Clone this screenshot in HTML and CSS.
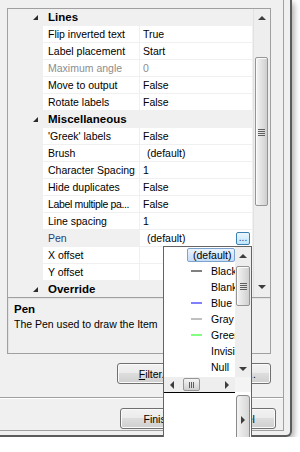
FILE: index.html
```html
<!DOCTYPE html>
<html lang="en">
<head>
  <meta charset="UTF-8">
  <title>Label Properties</title>
  <link rel="stylesheet" href="styles.css">
</head>
<body>
<div class="window">
  <div class="client">
    <!-- Property grid -->
    <div class="grid">
      <div class="rows">
        <div class="row cat"><span class="tog"></span><span class="cat-name">Lines</span></div>
        <div class="row"><span class="name">Flip inverted text</span><span class="value">True</span></div>
        <div class="row"><span class="name">Label placement</span><span class="value">Start</span></div>
        <div class="row off"><span class="name">Maximum angle</span><span class="value">0</span></div>
        <div class="row"><span class="name">Move to output</span><span class="value">False</span></div>
        <div class="row"><span class="name">Rotate labels</span><span class="value">False</span></div>
        <div class="row cat"><span class="tog"></span><span class="cat-name">Miscellaneous</span></div>
        <div class="row"><span class="name">'Greek' labels</span><span class="value">False</span></div>
        <div class="row"><span class="name">Brush</span><span class="value wide">(default)</span></div>
        <div class="row"><span class="name">Character Spacing</span><span class="value">1</span></div>
        <div class="row"><span class="name">Hide duplicates</span><span class="value">False</span></div>
        <div class="row"><span class="name tight">Label multiple pa...</span><span class="value">False</span></div>
        <div class="row"><span class="name">Line spacing</span><span class="value">1</span></div>
        <div class="row sel">
          <span class="name">Pen</span>
          <span class="value wide">(default)<span class="dots">...</span></span>
        </div>
        <div class="row"><span class="name">X offset</span><span class="value"></span></div>
        <div class="row"><span class="name">Y offset</span><span class="value"></span></div>
        <div class="row cat"><span class="tog"></span><span class="cat-name">Override</span></div>
      </div>
      <div class="vscroll">
        <div class="arrow"><span class="up"></span></div>
        <div class="thumb grid-thumb"><span class="grip"></span></div>
        <div class="arrow bottom"><span class="down"></span></div>
      </div>
    </div>

    <!-- Help text -->
    <div class="desc">
      <div class="desc-title">Pen</div>
      <div>The Pen used to draw the Item</div>
    </div>

    <div class="btn-row first">
      <button><u>F</u>ilter...</button>
      <button>Options...</button>
    </div>
    <div class="sep"></div>
    <div class="btn-row second">
      <button>Finish</button>
      <button>Cancel</button>
    </div>
  </div>

  <!-- Pen drop-down -->
  <div class="popup">
    <div class="plist">
      <div class="items">
        <div class="item"><span class="hl">(default)</span></div>
        <div class="item"><span class="sw black"></span>Black</div>
        <div class="item"><span class="sw"></span>Blank</div>
        <div class="item"><span class="sw blue"></span>Blue</div>
        <div class="item"><span class="sw gray"></span>Gray</div>
        <div class="item"><span class="sw green"></span>Green</div>
        <div class="item"><span class="sw"></span>Invisible</div>
        <div class="item"><span class="sw"></span>Null</div>
      </div>
      <div class="pscroll">
        <div class="arrow"><span class="up"></span></div>
        <div class="thumb list-thumb"><span class="grip"></span></div>
        <div class="arrow bottom"><span class="down"></span></div>
      </div>
    </div>
    <div class="phs">
      <div class="hbar">
        <div class="harrow"><span class="left"></span></div>
        <div class="hthumb"><span class="vgrip"></span></div>
        <div class="harrow end"><span class="right"></span></div>
      </div>
      <div class="corner"></div>
    </div>
    <div class="pbot">
      <div class="pbot-area"></div>
      <div class="pbot-side"><div class="pbtn"><span class="right"></span></div></div>
    </div>
  </div>
</div>
</body>
</html>
```

FILE: styles.css
```css
* {
  margin: 0;
  padding: 0;
  box-sizing: border-box;
}

body {
  font-family: 'Liberation Sans', Arial, sans-serif;
  font-size: 10.5px;
  color: #000;
  background: #fff;
}

/* Window frame */
.window {
  position: relative;
  width: 292px;
  height: 437px;
  background: #f0f0f0;
  border-right: 2px solid #5c5c5c;
  border-bottom: 2px solid #5c5c5c;
  border-bottom-right-radius: 6px;
  box-shadow: 2px 3px 6px rgba(0, 0, 0, 0.35);
}

.client {
  width: 284px;
  height: 431px;
  border-right: 1px solid #a0a0a0;
  border-bottom: 1px solid #a0a0a0;
  padding: 8px 0 0 7px;
}

/* Property grid */
.grid {
  display: flex;
  width: 264px;
  height: 289px;
  border: 1px solid #a0a0a0;
  border-bottom: none;
}

.rows {
  width: 245px;
  background: #f0f0f0;
  overflow: hidden;
}

.row {
  display: flex;
  height: 16px;
  margin-bottom: 1px;
  line-height: 16px;
  white-space: nowrap;
}

.row.cat {
  align-items: center;
}

.tog {
  width: 0;
  height: 0;
  margin-left: 25px;
  margin-right: 10px;
  border-left: 5px solid transparent;
  border-bottom: 5px solid #2b2b2b;
}

.cat-name {
  font-weight: bold;
  font-size: 11.5px;
}

.name {
  width: 96px;
  margin-left: 35px;
  margin-right: 1px;
  padding-left: 5px;
  background: #fff;
  overflow: hidden;
}

.name.tight {
  letter-spacing: -0.35px;
}

.value {
  display: flex;
  align-items: center;
  width: 112px;
  padding-left: 3px;
  background: #fff;
  overflow: hidden;
}

.value.wide {
  padding-left: 7px;
}

.row.off .name,
.row.off .value {
  color: #8d8d8d;
}

.row.sel .name {
  background: #f0f0f0;
  color: #23407a;
}

.dots {
  width: 14px;
  height: 13px;
  margin-left: auto;
  margin-right: 2px;
  border: 1px solid #3c7fb1;
  border-radius: 2px;
  background: linear-gradient(#eaf6fd, #bee6fd);
  color: #1c3a6e;
  font-size: 10px;
  line-height: 9px;
  text-align: center;
}

/* Scroll bars */
.vscroll,
.pscroll {
  display: flex;
  flex-direction: column;
  width: 17px;
  background: #eeeeee;
  border-left: 1px solid #e2e2e2;
}

.pscroll {
  width: 16px;
  border-left: none;
}

.arrow {
  display: flex;
  align-items: center;
  justify-content: center;
  height: 17px;
}

.arrow.bottom {
  margin-top: auto;
  margin-bottom: 2px;
}

.pscroll .arrow.bottom {
  margin-bottom: 0;
}

.up {
  border-left: 4px solid transparent;
  border-right: 4px solid transparent;
  border-bottom: 4px solid #3d3d3d;
}

.down {
  border-left: 4px solid transparent;
  border-right: 4px solid transparent;
  border-top: 4px solid #3d3d3d;
}

.left {
  border-top: 4px solid transparent;
  border-bottom: 4px solid transparent;
  border-right: 4px solid #3d3d3d;
}

.right {
  border-top: 4px solid transparent;
  border-bottom: 4px solid transparent;
  border-left: 4px solid #3d3d3d;
}

.thumb {
  display: flex;
  align-items: center;
  justify-content: center;
  margin: 0 2px 0 1px;
  border: 1px solid #959595;
  border-radius: 2px;
  background: linear-gradient(to right, #f4f4f4, #e2e2e2 50%, #cfcfcf);
  box-shadow: inset 1px 1px #fbfbfb;
}

.grid-thumb {
  height: 149px;
  margin-top: 31px;
}

.list-thumb {
  height: 40px;
  margin: 2px 1px 0 1px;
}

.grip {
  width: 7px;
  height: 1px;
  margin-top: -5px;
  background: #5e5e5e;
  box-shadow: 0 2px #5e5e5e, 0 4px #5e5e5e, 0 6px #5e5e5e;
}

/* Description panel */
.desc {
  width: 264px;
  height: 57px;
  border: 1px solid #a0a0a0;
  box-shadow: inset 1px 1px #e3e3e3;
  padding: 4px 6px 0;
  line-height: 15px;
}

.desc-title {
  font-weight: bold;
  font-size: 11.5px;
}

/* Buttons */
.btn-row {
  display: flex;
  gap: 4px;
}

.btn-row.first {
  margin-top: 9px;
  padding-left: 110px;
}

.btn-row.second {
  margin-top: 10px;
  padding-left: 113px;
  gap: 6px;
}

button {
  width: 75px;
  height: 21px;
  border: 1px solid #707070;
  border-radius: 3px;
  background: linear-gradient(#f2f2f2 0%, #ebebeb 50%, #dddddd 50%, #cfcfcf 100%);
  box-shadow: inset 0 0 0 1px #fafafa;
  font-family: inherit;
  font-size: 10.5px;
  color: #000;
}

.sep {
  height: 1px;
  margin: 13px 0 0 -7px;
  background: #a0a0a0;
  box-shadow: 0 1px #fff;
}

/* Pen drop-down list */
.popup {
  position: absolute;
  left: 163px;
  top: 246px;
  width: 89px;
  height: 200px;
  border: 1px solid #646464;
  background: #fff;
}

.plist {
  display: flex;
  height: 130px;
}

.items {
  width: 71px;
  overflow: hidden;
}

.item {
  display: flex;
  align-items: center;
  height: 16px;
  white-space: nowrap;
}

.hl {
  width: 48px;
  height: 14px;
  margin-left: 23px;
  padding-left: 5px;
  border: 1px solid #7da2ce;
  border-radius: 2px;
  background: linear-gradient(#ebf4fd, #c5dcf8);
  line-height: 12px;
}

.sw {
  flex: none;
  width: 11px;
  height: 2px;
  margin: 0 9px 0 27px;
}

.sw.black { background: #808080; }
.sw.blue { background: #8080ff; }
.sw.gray { background: #c0c0c0; }
.sw.green { background: #80ff80; }

.phs {
  display: flex;
  height: 15px;
}

.hbar {
  display: flex;
  align-items: center;
  width: 71px;
  background: #eeeeee;
}

.harrow {
  display: flex;
  align-items: center;
  justify-content: center;
  width: 15px;
  height: 15px;
}

.harrow.end {
  margin-left: auto;
  margin-right: 1px;
}

.hthumb {
  display: flex;
  align-items: center;
  justify-content: center;
  width: 17px;
  height: 13px;
  margin-left: 4px;
  border: 1px solid #959595;
  border-radius: 2px;
  background: linear-gradient(#f4f4f4, #e2e2e2 50%, #cfcfcf);
}

.vgrip {
  width: 1px;
  height: 6px;
  margin-left: -4px;
  background: #5e5e5e;
  box-shadow: 2px 0 #5e5e5e, 4px 0 #5e5e5e;
}

.corner {
  width: 16px;
  background: #f4f4f4;
}

.pbot {
  display: flex;
  height: 53px;
}

.pbot-area {
  width: 71px;
  border-top: 1px solid #000;
}

.pbot-side {
  width: 16px;
  padding: 3px 1px 0 1px;
}

.pbtn {
  display: flex;
  align-items: center;
  justify-content: center;
  height: 49px;
  border: 1px solid #8a8a8a;
  border-radius: 3px;
  background: linear-gradient(to right, #f4f4f4, #e4e4e4 50%, #d6d6d6);
}
```
